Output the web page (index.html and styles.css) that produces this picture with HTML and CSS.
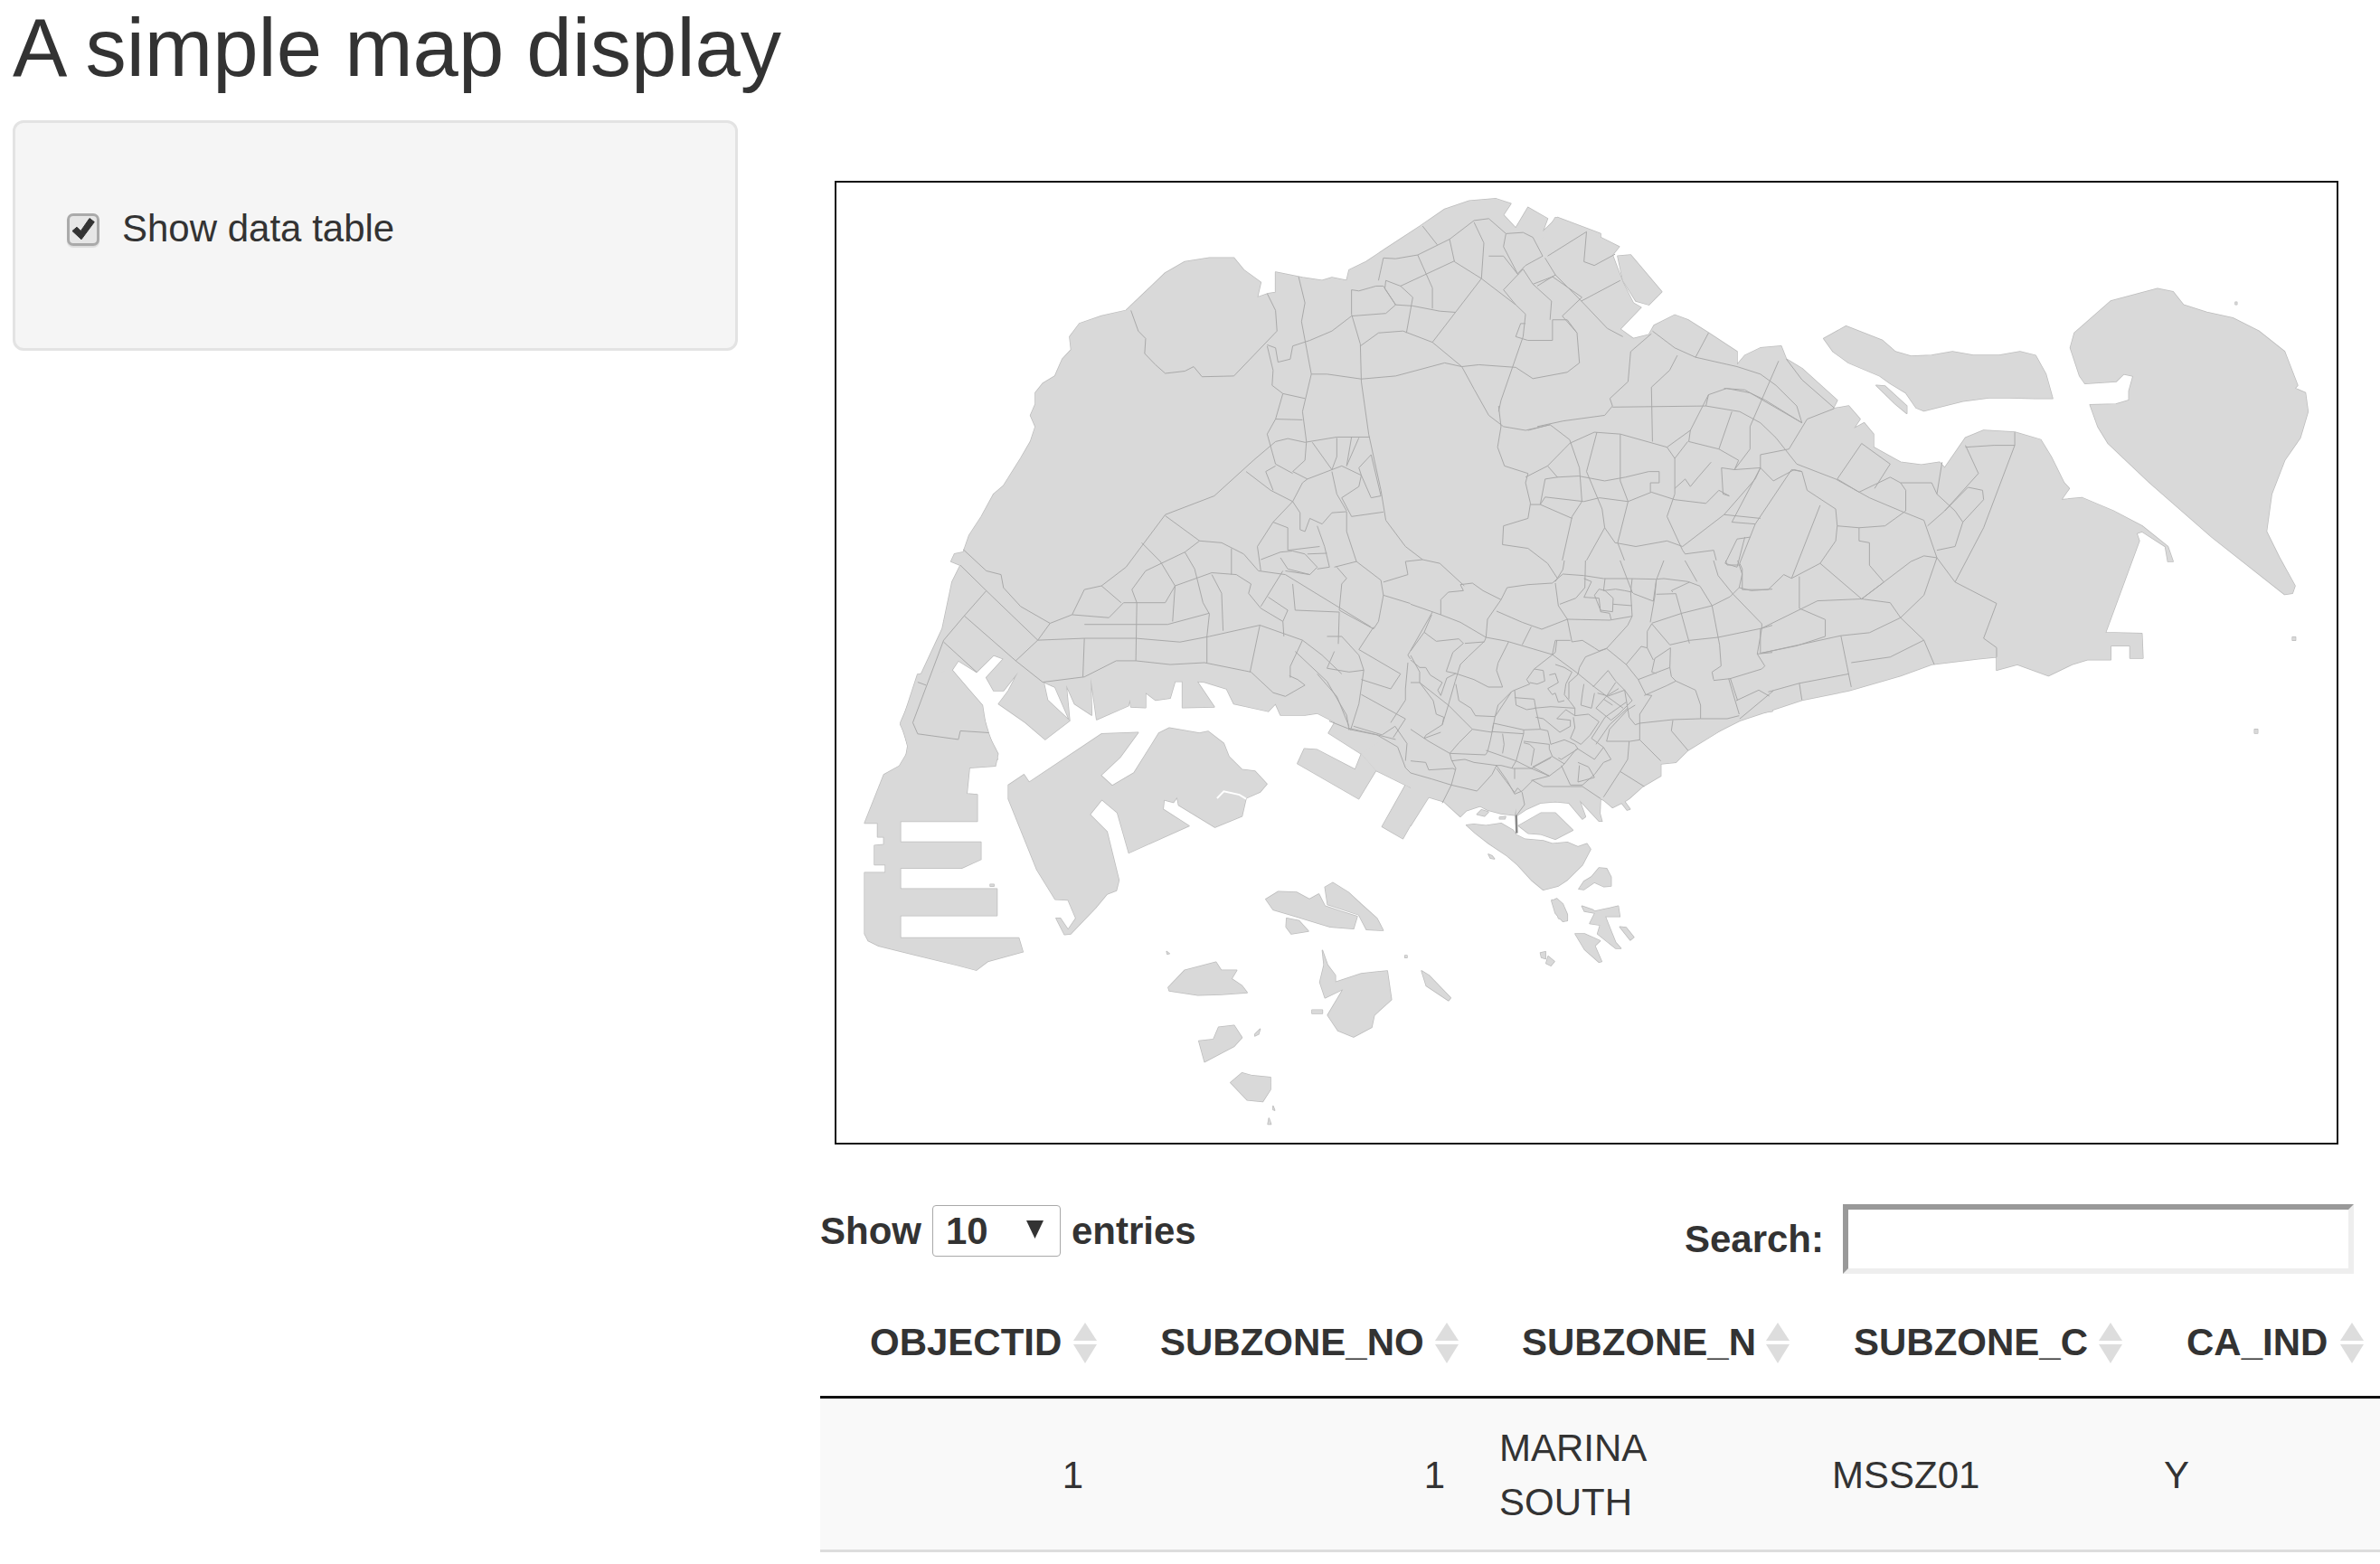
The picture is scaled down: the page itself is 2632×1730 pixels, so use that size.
FILE: index.html
```
<!DOCTYPE html>
<html lang="en">
<head>
<meta charset="utf-8">
<title>A simple map display</title>
<link rel="stylesheet" href="styles.css">
</head>
<body>
<div class="page">
  <h1 class="title">A simple map display</h1>
  <div class="layout">
    <aside class="sidebar">
      <div class="well">
        <label class="check-row">
          <span class="check-box"><svg class="check-mark" viewBox="3 3 30 29"><polygon points="6,19 11,14.7 15.3,19 25,5 30.3,9 16,28.3"/></svg></span>
          <span>Show data table</span>
        </label>
      </div>
    </aside>
    <main class="main">
      <div class="map-box">
        <svg class="map" viewBox="925 202 1659 1062" xmlns="http://www.w3.org/2000/svg">
          <defs>
            <g id="land">
              <g transform="translate(920 190) scale(.5421 .4145)">
                <path d="M140 1470 150 1440 175 1360 225 1220 245 1095 262 1050 243 1040 250 1020 268 1015 280 970 305 920 330 860 350 838 385 765 405 720 415 680 405 650 415 620 415 590 430 565 455 545 470 500 488 475 485 440 505 405 550 385 600 370 640 320 680 270 720 240 770 230 820 230 840 262 875 295 868 335 890 325 905 322 905 268 960 282 1000 290 1020 282 1050 290 1055 262 1090 240 1130 205 1200 145 1250 100 1300 78 1355 72 1385 85 1370 115 1395 150 1420 95 1460 125 1450 160 1480 122 1568 165 1568 1568 1300 1568 1079 1553 1013 1498 1026 1469 990 1445 965 1450 915 1450 905 1420 890 1440 820 1420 805 1380 760 1362 745 1360 780 1428 715 1430 715 1360 700 1360 690 1405 660 1410 640 1390 640 1430 610 1428 605 1385 615 1362 605 1425 540 1462 528 1350 530 1450 495 1420 478 1370 485 1465 455 1375 432 1362 440 1410 485 1465 435 1515 395 1470 340 1420 360 1385 380 1335 350 1385 330 1385 315 1350 350 1300 330 1290 295 1335 258 1305 245 1330 300 1415 320 1500 338 1568 150 1568 155 1530Z"/>
              </g>
              <g transform="translate(1700 190) scale(.574 .4145)">
                <path d="M35 122 100 160 158 200 145 222 165 295 185 350 200 362 160 420 185 445 215 435 225 410 265 382 290 395 330 430 385 480 385 515 400 490 430 470 470 465 480 500 510 525 578 610 570 632 600 625 622 660 610 685 630 670 648 700 648 735 700 775 740 782 775 775 785 790 825 710 860 690 920 695 970 715 990 760 1015 830 1025 845 1010 875 1050 870 1110 905 1165 945 1215 1000 1225 1040 1215 1040 1210 1000 1165 960 1155 965 1160 985 1095 1230 1165 1232 1167 1298 1142 1298 1142 1265 1105 1265 1105 1302 1060 1302 1030 1315 985 1345 925 1315 885 1330 885 1295 850 1300 760 1315 700 1345 600 1385 510 1410 390 1465 340 1500 300 1530 270 1568 0 1568 0 200Z"/>
                <path d="M155 225 180 222 240 320 215 355 190 345 165 290Z"/>
                <path d="M552 445 595 412 665 450 690 480 720 492 760 490 800 480 840 490 890 490 930 480 960 490 980 540 993 605 960 605 910 603 870 603 820 612 745 638 730 630 710 590 680 565 660 545 600 510 570 480Z"/>
                <path d="M653 570 670 572 712 625 712 645 690 620Z"/>
                <path d="M1027 470 1035 430 1105 345 1195 312 1225 320 1245 355 1290 375 1340 390 1390 425 1440 480 1465 570 1460 578 1480 590 1485 640 1470 710 1440 770 1415 860 1405 960 1430 1030 1460 1105 1455 1125 1440 1128 1300 975 1180 830 1100 725 1080 680 1065 622 1115 620 1140 610 1140 585 1148 545 1130 540 1115 560 1055 565 1045 545Z"/>
                <path d="M1345 348h3v6h-3zM1455 1242h6v8h-6zM1382 1488h6v10h-6z"/>
              </g>
              <g transform="translate(920 700) scale(.574 .3827)">
                <path d="M165 120 232 110 290 210 298 285 320 350 315 385 265 390 260 465 280 468 280 545 132 545 132 605 287 605 287 655 250 680 132 680 132 740 318 740 318 817 132 817 132 882 360 882 368 922 300 950 278 975 240 960 90 905 70 890 63 870 63 693 103 693 103 670 82 670 82 615 100 612 100 590 88 590 88 550 63 550 100 410 130 385 148 340 140 290 132 265 140 235Z"/>
                <path d="M897 378 910 335 935 338 1008 395 1020 350 1048 398 1015 480Z"/>
                <path d="M1060 560 1105 440 1145 475 1100 595Z"/>
                <path d="M1020 350 1048 398 1105 440 1122 452 1122 300 1070 300Z"/>
                <path d="M340 440 370 410 380 432 520 292 590 288 555 360 518 412 540 442 582 405 630 290 650 275 708 290 725 285 755 320 765 358 790 395 815 400 838 437 825 460 798 478 790 530 738 562 668 498 665 475 658 490 640 483 638 510 688 558 572 636 550 520 520 482 497 525 530 575 553 715 548 745 530 755 508 795 460 870 448 872 432 825 440 825 455 858 470 825 455 772 430 770 395 685 340 480Z"/>
                <path d="M836 770 860 748 895 750 920 770 938 755 950 790 980 805 1012 820 1005 855 960 850 890 818 850 800Z"/>
                <path d="M950 735 965 722 995 750 1020 785 1050 825 1062 860 1030 858 1015 815 955 785Z"/>
                <path d="M876 825 900 832 918 862 885 870 875 850Z"/>
                <path d="M1387 772 1400 775 1415 815 1415 832 1400 825Z"/>
                <path d="M1445 790 1465 800 1470 805 1515 790 1518 820 1490 820 1510 895 1520 912 1510 912 1475 870 1480 845 1460 840 1470 810 1450 805Z"/>
                <path d="M1432 870 1450 870 1480 890 1470 905 1483 950 1478 952 1450 915Z"/>
                <path d="M1518 850 1530 852 1545 880 1538 888Z"/>
                <path d="M1365 925 1375 922 1375 942 1367 938Z"/>
                <path d="M1380 935 1392 950 1385 962 1376 955Z"/>
                <path d="M648 1025 680 975 740 952 750 975 780 975 770 1000 790 1020 800 1040 750 1045 705 1047 650 1035Z"/>
                <path d="M945 918 955 960 970 990 970 1010 1020 985 1070 977 1078 1060 1045 1105 1040 1140 1005 1168 975 1150 955 1105 985 1030 950 1055 940 1010 948 960Z"/>
                <path d="M1136 977 1150 990 1192 1055 1188 1063 1145 1020Z"/>
                <path d="M925 1090h20v10h-20z"/>
                <path d="M707 1180 735 1175 745 1140 775 1135 790 1170 775 1195 718 1240Z"/>
                <path d="M768 1300 790 1272 810 1280 845 1285 845 1320 830 1355 800 1350Z"/>
                <path d="M815 1160 825 1145 822 1160 815 1165Z"/>
                <path d="M645 921 650 927 646 928Z M305 727h7v5h-7z M850 1368 853 1380 850 1378Z M842 1403 846 1420 840 1420Z M1104 933h4v6h-4z"/>
              </g>
              <g transform="translate(1560 620) scale(.33333)">
                <path d="M1200 500 1090 515 1050 548 1010 575 920 630 880 670 830 675 830 715 770 750 725 790 710 800 728 825 718 828 700 805 670 820 640 795 630 790 628 840 635 865 625 865 560 795 580 850 570 858 525 805 480 800 430 805 385 825 355 845 350 845 350 822 345 845 300 840 255 828 230 815 185 830 165 850 110 800 60 785 0 880 0 0 1200 0Z"/>
                <path d="M185 878 210 875 250 880 300 872 340 895 350 910 380 925 440 930 470 940 520 935 555 950 585 940 597 958 570 1010 520 1060 490 1080 440 1093 400 1060 355 1010 320 980 260 940 215 905Z"/>
                <path d="M358 880 432 838 480 838 538 895 480 925 430 908 390 905Z"/>
                <path d="M220 842 235 827 258 835 245 848Z M295 852 315 850 313 857 295 857Z"/>
                <path d="M558 1090 575 1065 600 1050 625 1020 650 1022 665 1050 665 1080 640 1082 610 1068 575 1092Z"/>
                <path d="M468 1130 485 1122 505 1140 520 1175 520 1195 505 1198 480 1170Z"/>
                <path d="M258 975 270 980 278 990 265 988Z"/>
              </g>
            </g>
          </defs>
          <use href="#land" class="land-edge"/>
          <use href="#land" class="land-fill"/>
          <g transform="translate(920 700) scale(.574 .3827)">
            <path class="slit" d="M742 478 755 458 785 468 798 480"/>
          </g>
          <g transform="translate(920 190) scale(.5421 .4145)">
            <path class="line" d="M268 1008 315 1065 345 1075 350 1110 385 1160 445 1205 490 1182M262 1050 315 1118 420 1250 375 1305 430 1362M315 1118 270 1185 375 1305M270 1185 228 1250 165 1470 175 1500 258 1515 262 1492 320 1497M228 1255 295 1335M175 1362 192 1370M445 1205 420 1250 515 1245 620 1245 710 1255 770 1240 873 1210 960 1250 1000 1290 1040 1340M430 1362 515 1348 580 1305 620 1305 690 1315 760 1310 855 1335 900 1390 925 1400 965 1370 950 1355 933 1345M490 1182 515 1115 550 1105 600 1055 680 915 780 865 860 770 905 720 930 712 965 722 1030 708 1097 708M490 1182 565 1190 595 1150 680 1150 700 1105 775 1070 825 1075 855 1100M550 1105 590 1150M632 990 670 1040 700 1105 695 1200M680 918 750 985 720 1015 640 1065 612 1115 622 1150 620 1305M750 985 795 990 840 1020 870 1065 925 1075M720 1015 740 1060 757 1150 770 1180 765 1240 765 1310M515 1208 685 1208 770 1178M515 1245 512 1348M815 1005 815 1075M873 1210 853 1335M775 1075 795 1125 798 1225M855 1100 850 1125 875 1165 920 1200 922 1240M920 1065 875 1160M890 1135 930 1170 920 1200M875 1065 868 1000 900 935 940 880 960 830 970 820M875 1035 915 1015 940 1012 965 1020 990 1055 975 1075 925 1065M915 1030 930 1060 975 1075M845 800 895 850 940 880 955 910 955 955 965 960 975 925 1000 940 1020 910 1050 907M900 935 930 950 930 1010 995 1000M990 945 1005 1000 1015 1055 990 1060M1050 907 1050 960 1070 1040 1025 1055M970 1020 1010 1018M1070 1040 1120 1090 1125 1130 1115 1200 1105 1220 1035 1170 1040 1100 1050 1085 1030 1055M940 1100 945 1170 1035 1175 1033 1260M925 1075 1100 1215M1125 1130 1180 1152M1105 1215 1075 1275M1060 315 1060 380 1078 460 1080 560 1095 700 1120 850 1130 930 1170 1000 1205 1035 1240 1045 1290 1105M1125 1095 1175 1075 1170 1040 1205 1035M952 280 965 350 958 400 978 540 960 640 968 720 965 770 940 800 970 820 1040 785 1080 810 1075 840 1040 870 1060 920 1125 908M1020 800 1030 860 1050 905M980 722 1020 795 1030 760 1030 710M888 465 900 530 898 570 920 592 965 605M920 592 905 660 888 700 905 780 940 805M905 660 960 662M885 800 900 850M885 800 905 785M1060 708 1050 785 1075 710M1100 755 1075 790 1080 810 1100 870 1120 865 1100 755M820 545 755 547 738 520 720 532 680 538 660 515 638 485 640 445 625 425 610 370M820 545 908 425 905 370 888 325M888 462 905 470 910 508 935 500 940 465 975 450 1020 425 1060 385 1130 378 1150 355 1125 305 1110 305 1075 318 1060 315M1150 355 1185 358 1240 372 1272 375M1150 355 1128 312 1130 290 1160 305 1185 335 1172 430M1115 290 1125 230 1150 232 1195 222 1260 180 1310 130 1340 125 1375 165 1410 162 1430 175 1450 225M1260 180 1270 240 1325 285 1395 355 1415 380 1410 440 1365 610 1360 640M1205 145 1235 195M1310 135 1330 190 1325 285 1225 455M1195 222 1225 310 1225 365M1270 238 1160 305M1078 465 1115 430 1165 425 1225 455 1285 520 1310 580 1340 650 1370 680 1415 690 1465 675M978 540 1010 540 1080 553 1150 545 1250 510 1285 520 1320 515 1395 522 1430 552 1500 535 1525 510 1520 430 1500 395 1470 395 1470 450 1420 450 1395 440 1405 405 1415 405M1465 395 1468 345 1430 300 1410 260 1370 315M1340 225 1370 225 1400 275 1370 200 1375 165M1400 270 1415 250 1450 225M1370 315 1395 355M1430 300 1470 280 1530 335 1490 385 1520 430M1360 625 1365 680 1358 735 1372 785 1420 805 1415 830 1425 885 1420 925 1370 945 1368 995 1420 1005 1460 1045 1480 1085M1420 690 1465 675 1505 715 1525 790 1530 880 1510 920 1490 1037M1415 815 1460 785 1505 725M1460 785 1480 815M1480 815 1455 820 1445 888 1425 888M1445 888 1455 868M1445 888 1510 925M1225 1175 1175 1290M1175 1290 1180 1300M1010 1240 1040 1240 1075 1290 1085 1330 1055 1335 1010 1325 1025 1280M1085 1330 1075 1420 1058 1490M1075 1275 1160 1340 1140 1380 1080 1355M1080 1395 1170 1460 1145 1510M945 1280 1010 1360 1050 1450 1055 1490M960 1250 935 1320 935 1350M990 1340 1030 1400 1055 1480M1175 1310 1170 1380 1170 1410 1140 1470M1055 1485 1120 1505 1150 1515"/>
          </g>
          <g transform="translate(920 700) scale(.574 .3827)">
            <path class="line" d="M958 255 1000 280 1050 295 1090 330 1105 390 1115 405M1005 270 1060 295 1085 270 1108 320 1105 370"/>
          </g>
          <g transform="translate(1700 190) scale(.574 .4145)">
            <path class="line" d="M95 160 90 240 110 250 150 220M20 225 95 160M15 230 35 275 85 345M35 275 0 305M85 345 160 290M85 345 135 418 165 440M180 480 175 560 140 605 145 625 130 650 50 665 0 680M220 432 180 480M305 495 330 430M222 425 265 470 305 495 385 520 430 540 460 570 500 625 510 670M270 490 255 530 220 575 222 720M145 628 325 625 390 640 430 670 460 710 500 780 575 820 640 870 700 905 745 930 770 1030 805 1095 885 1152 860 1245 885 1270 885 1295M325 625 330 595 365 578 410 590 440 610 510 670M330 595 295 690 292 720 350 740 388 770 380 795M465 505 410 680 410 740 380 795M480 500 510 555 572 630M360 578 400 582 510 670M375 640 350 740M572 632 520 660 485 740 430 755 430 790 455 825 495 795 510 800 520 850 575 900 578 945 620 950 670 945 710 905 710 850 700 830 680 815 620 855 578 820 625 725 680 780 650 845M700 830 760 830 770 860 805 905 820 935 860 875 858 850 830 842 785 905 752 945M825 730 850 805 785 905M825 735 880 730 920 730 920 695M920 730 860 950 805 1095M770 860 780 775M820 935 805 1000 770 1010M578 945 575 985 545 1045 490 1085 475 1075 445 1115 395 1115 395 1060 390 1045 420 940 490 795 510 800M545 890 490 1085M545 1045 625 1140 680 1150 700 1190 745 1250 765 1315M620 950 620 985 640 990 640 1050 668 1095 625 1140 720 1040 745 1025 770 1030 745 1130 700 1190 640 1230 585 1238 430 1285 430 1220M625 1140 540 1145 430 1220M505 1080 505 1165 555 1195 555 1240M585 1238 605 1375M605 1310 680 1295 745 1250M430 1285 500 1265 555 1240M62 725 110 695 160 700 250 735 265 765 265 860 250 920 280 1010 285 1020 340 1010 345 1037M115 695 95 800 125 900 130 950 150 990 190 1000 250 985 280 1000 360 915 420 820 430 790 380 795 355 790 358 860 370 865 350 850 325 885 265 875 220 855 175 880 120 870 90 880 15 868M160 700 160 825 175 880 155 990 168 1037M38 815 80 812 130 825 170 815 215 800 235 800 235 830 218 830 218 855M130 950 95 1037M250 735 295 690M265 765 290 720M335 775 310 815 295 840 285 820 265 845M420 940 375 935 430 790M360 915 430 925M410 975 385 980 362 1045 385 1055 400 975M445 1388 505 1365 600 1340M505 1365 510 1410M390 1460 455 1385"/>
          </g>
          <g transform="translate(1560 620) scale(.33333)">
            <path class="line" d="M0 145 100 180 165 205 250 255 320 268 470 312 555 375 610 420 650 450M100 180 100 130 125 105 175 100 165 80 205 75 240 100 300 130 320 90 390 80 470 75 505 45 575 50 640 60 720 60 815 62 840 60 920 70 960 85 1000 150 1025 280 1030 350 1000 370 1005 395M300 130 255 195 250 255 245 268 190 320 165 345 148 400 125 480 105 545 50 580 45 590M285 168 370 205 435 228 520 195 660 198 735 185 730 105 735 60M480 75 490 150 520 195 535 270 570 265 610 290 625 300 650 292 720 215 735 185M400 220 370 280M325 270 290 340 285 365 305 420 258 420 210 395 150 375 118 368 140 305 175 275 160 260 85 268 45 238 0 300M70 180 45 238M245 270 180 275M485 265 480 305 410 360M470 312 480 265 530 265M650 292 580 320 560 355 555 378M650 292 715 345 755 395 780 445 800 448 760 510 760 540 745 545 725 520 710 430 680 400 655 365 605 420M755 395 860 355 862 290 810 325 800 370 815 375M715 345 765 285 785 290 805 330M785 290 785 235 800 210 860 280 925 265 1020 255 1165 225 1200 215M800 208 900 175 1000 150 1060 120 1090 90 1100 45 1085 0M1070 112 1165 210 1165 225 1150 310 1175 350 1165 360 1060 392 1005 398M860 355 865 385 880 400 945 430 962 480 962 525M880 400 850 415 775 448M760 540 870 528 962 525 1050 525 1090 515M870 530 865 565 920 630M1055 392 1090 510M1080 465 1155 430 1190 450M760 540 760 595 830 665M728 600 760 595M725 600 720 660 695 700 640 785M695 700 775 750M650 600 728 600M650 600 660 560 720 495 745 480M0 315 30 370 30 405 75 465 85 510 110 520 105 545M0 330 30 355 50 355 65 380 105 405 90 430 100 448 120 390 150 375M0 405 30 405M30 405 125 480 205 560 160 605 130 640 135 660 150 690 135 745 105 805M150 410 160 465 200 490 215 515 280 518 335 435 345 430 395 410 385 395 410 360 440 365 445 400 420 410 395 405M345 430 350 480 385 495 415 490 410 460 345 455M335 435 290 480 280 518 270 570 265 595 255 635 248 645 130 640M205 560 270 570 275 540 375 562 375 575 270 568M0 560 60 600 130 640M45 590 100 570M0 665 50 670 60 695 140 690 150 695M0 705 70 725 135 745 220 765 270 710 285 680M135 665 180 660 210 670 285 680 300 680 340 690 400 690 460 715M250 630 350 665 400 690 465 655M305 575 310 610 305 640M375 575 350 665 335 690M375 605 395 610 410 625 400 680M375 600 460 610 460 625 470 650 405 685 460 715 500 685 510 675 470 650M415 490 430 560 375 562M430 560 455 565 465 610 510 595 545 610 555 625 500 660 490 655M500 680 530 745 570 745 610 710 640 670 665 660 640 620 600 590M285 680 320 730 345 775 370 765 405 730 440 750 530 750 570 750 630 790M400 730 460 715M285 690 315 730 345 770 355 755 370 770 378 810 352 845M345 690 345 725M510 675 550 625M555 670 590 685 610 720 555 735 560 680M555 625 610 660 640 620M545 515 590 510 625 535 595 580 565 610 530 590 545 555 540 520M410 490 465 485 545 490 545 515 515 495 485 525 530 530 530 550 495 570 440 525 415 520M600 590 645 520 715 470M615 610 660 545 720 490M620 440 655 450 710 430 735 465 690 510 665 530 615 490 650 450 680 405M650 450 705 490M650 450 690 425M640 460 670 480M480 345 510 355 535 370 515 410 510 445 530 470 545 490M460 380 480 375 490 405 455 425 470 445 480 440 490 470 510 465M555 378 525 405 525 460M575 410 570 440 565 480 600 490 610 440M480 70 505 30 510 0M580 0 578 90 548 125 495 145M575 60 600 70 575 122 625 125 630 170 660 175 665 195M625 95 610 115 630 165 670 170 672 125 645 100 625 95M645 60 640 100 680 95 710 100 735 105M672 145 735 150M695 0 735 105 740 110 805 135 815 65 840 0M815 65 810 120 795 205M815 112 880 110 895 165 925 275M870 105 865 100 925 72M910 0 950 70M1005 0 1020 50 1070 112M1090 90 1130 100 1200 95M1045 0 1050 15 1090 15M1150 310 1200 305M1060 390 1085 465"/>
            <path class="causeway" d="M350 845 352 905"/>
          </g>
        </svg>
      </div>
      <div class="controls">
        <div class="length">
          <span>Show</span>
          <span class="select-wrap">
            <select class="select"><option>10</option><option>25</option><option>50</option><option>100</option></select>
            <svg class="select-arrow" viewBox="0 0 19 20"><polygon points="0,0 19,0 9.5,20"/></svg>
          </span>
          <span>entries</span>
        </div>
        <label class="search">Search:<input class="search-input" type="search"></label>
      </div>
      <table class="table">
        <colgroup>
          <col class="col-1"><col class="col-2"><col class="col-3"><col class="col-4"><col class="col-5">
        </colgroup>
        <thead>
          <tr>
            <th>OBJECTID<svg class="sort" viewBox="0 0 26 45"><polygon points="13,0 26,20 0,20"/><polygon points="0,24 26,24 13,45"/></svg></th>
            <th class="th-mid">SUBZONE_NO<svg class="sort" viewBox="0 0 26 45"><polygon points="13,0 26,20 0,20"/><polygon points="0,24 26,24 13,45"/></svg></th>
            <th class="th-mid">SUBZONE_N<svg class="sort" viewBox="0 0 26 45"><polygon points="13,0 26,20 0,20"/><polygon points="0,24 26,24 13,45"/></svg></th>
            <th class="th-wide">SUBZONE_C<svg class="sort" viewBox="0 0 26 45"><polygon points="13,0 26,20 0,20"/><polygon points="0,24 26,24 13,45"/></svg></th>
            <th class="th-wide th-last">CA_IND<svg class="sort" viewBox="0 0 26 45"><polygon points="13,0 26,20 0,20"/><polygon points="0,24 26,24 13,45"/></svg></th>
          </tr>
        </thead>
        <tbody>
          <tr>
            <td class="num">1</td>
            <td class="num">1</td>
            <td class="name">MARINA SOUTH</td>
            <td class="code">MSSZ01</td>
            <td>Y</td>
          </tr>
        </tbody>
      </table>
    </main>
  </div>
</div>
</body>
</html>
```
FILE: styles.css
```
* { box-sizing: border-box; }
html, body { margin: 0; height: 1730px; overflow: hidden; background: #fff; }
body { font-family: "Liberation Sans", Arial, sans-serif; font-size: 42px; line-height: 60px; color: #333; }
.page { width: 2632px; }
.title { margin: 3px 0 31px 14px; font-size: 90.5px; line-height: 99px; font-weight: 400; color: #333; }
.layout { display: flex; align-items: flex-start; }
.sidebar { width: 802px; margin-left: 14px; flex: none; }
.well { height: 255px; padding: 87px 57px 0; background: #f5f5f5; border: 3px solid #e3e3e3; border-radius: 12px; }
.check-row { display: flex; align-items: center; gap: 25px; }
.check-box { display: flex; width: 36px; height: 36px; margin-top: 2px; border: 3px solid #aaa; border-radius: 7px; background: #e6e6e6; box-shadow: 0 2px 1px #ddd; }
.check-mark { width: 30px; height: 30px; fill: #333; stroke: #333; stroke-width: 1; }
.main { width: 1725px; margin-left: 91px; flex: none; overflow: hidden; }
.map-box { width: 1663px; height: 1066px; margin: 67px 0 66px 16px; border: 2px solid #111; background: #fff; }
.map { display: block; width: 1659px; height: 1062px; }
.land-edge { fill: none; stroke: #bdbdbd; stroke-width: 1.5; }
.land-fill { fill: #d9d9d9; stroke: none; }
#land path { vector-effect: non-scaling-stroke; stroke-linejoin: round; }
.line { fill: none; stroke: #a9a9a9; stroke-width: 1; stroke-linejoin: round; vector-effect: non-scaling-stroke; }
.slit { fill: none; stroke: #fff; stroke-width: 2; vector-effect: non-scaling-stroke; }
.causeway { fill: none; stroke: #888; stroke-width: 2.5; vector-effect: non-scaling-stroke; }
.controls { display: flex; justify-content: space-between; align-items: flex-start; width: 1696px; height: 77px; margin-bottom: 15px; font-weight: 700; }
.length { display: flex; align-items: center; gap: 12px; height: 57px; margin-top: 1px; }
.select-wrap { position: relative; display: block; width: 142px; height: 57px; }
.select { appearance: none; display: block; width: 142px; height: 57px; padding: 0 0 0 14px; border: 1px solid #a9a9a9; border-radius: 4px; background: #fff; color: #333; font: 700 42px/55px "Liberation Sans", Arial, sans-serif; }
.select-arrow { position: absolute; top: 17px; right: 19px; width: 19px; height: 20px; fill: #333; }
.search { display: flex; align-items: center; gap: 21px; }
.search-input { display: block; width: 565px; height: 77px; padding: 0; background: #fff; border: 6px solid; border-color: #999 #eee #eee #999; border-radius: 0; }
.table { table-layout: fixed; width: 1753px; border-collapse: separate; border-spacing: 0; }
.col-1 { width: 319px; }
.col-2 { width: 400px; }
.col-3 { width: 366px; }
.col-4 { width: 368px; }
.col-5 { width: 300px; }
.table th { position: relative; padding: 31px 0 29px 55px; text-align: left; white-space: nowrap; font-weight: 700; border-bottom: 3px solid #111; }
.table .th-mid { padding-left: 57px; }
.table .th-wide { padding-left: 58px; }
.sort { position: absolute; top: 39px; right: 13px; width: 26px; height: 45px; fill: #ddd; }
.th-last .sort { right: auto; left: 228px; }
.table td { padding: 25px 33px 22px; background: #f9f9f9; border-bottom: 3px solid #ddd; }
.table .num { text-align: right; padding-right: 28px; }
.table .name { padding-left: 32px; }
.table .code { padding-left: 34px; }
```
